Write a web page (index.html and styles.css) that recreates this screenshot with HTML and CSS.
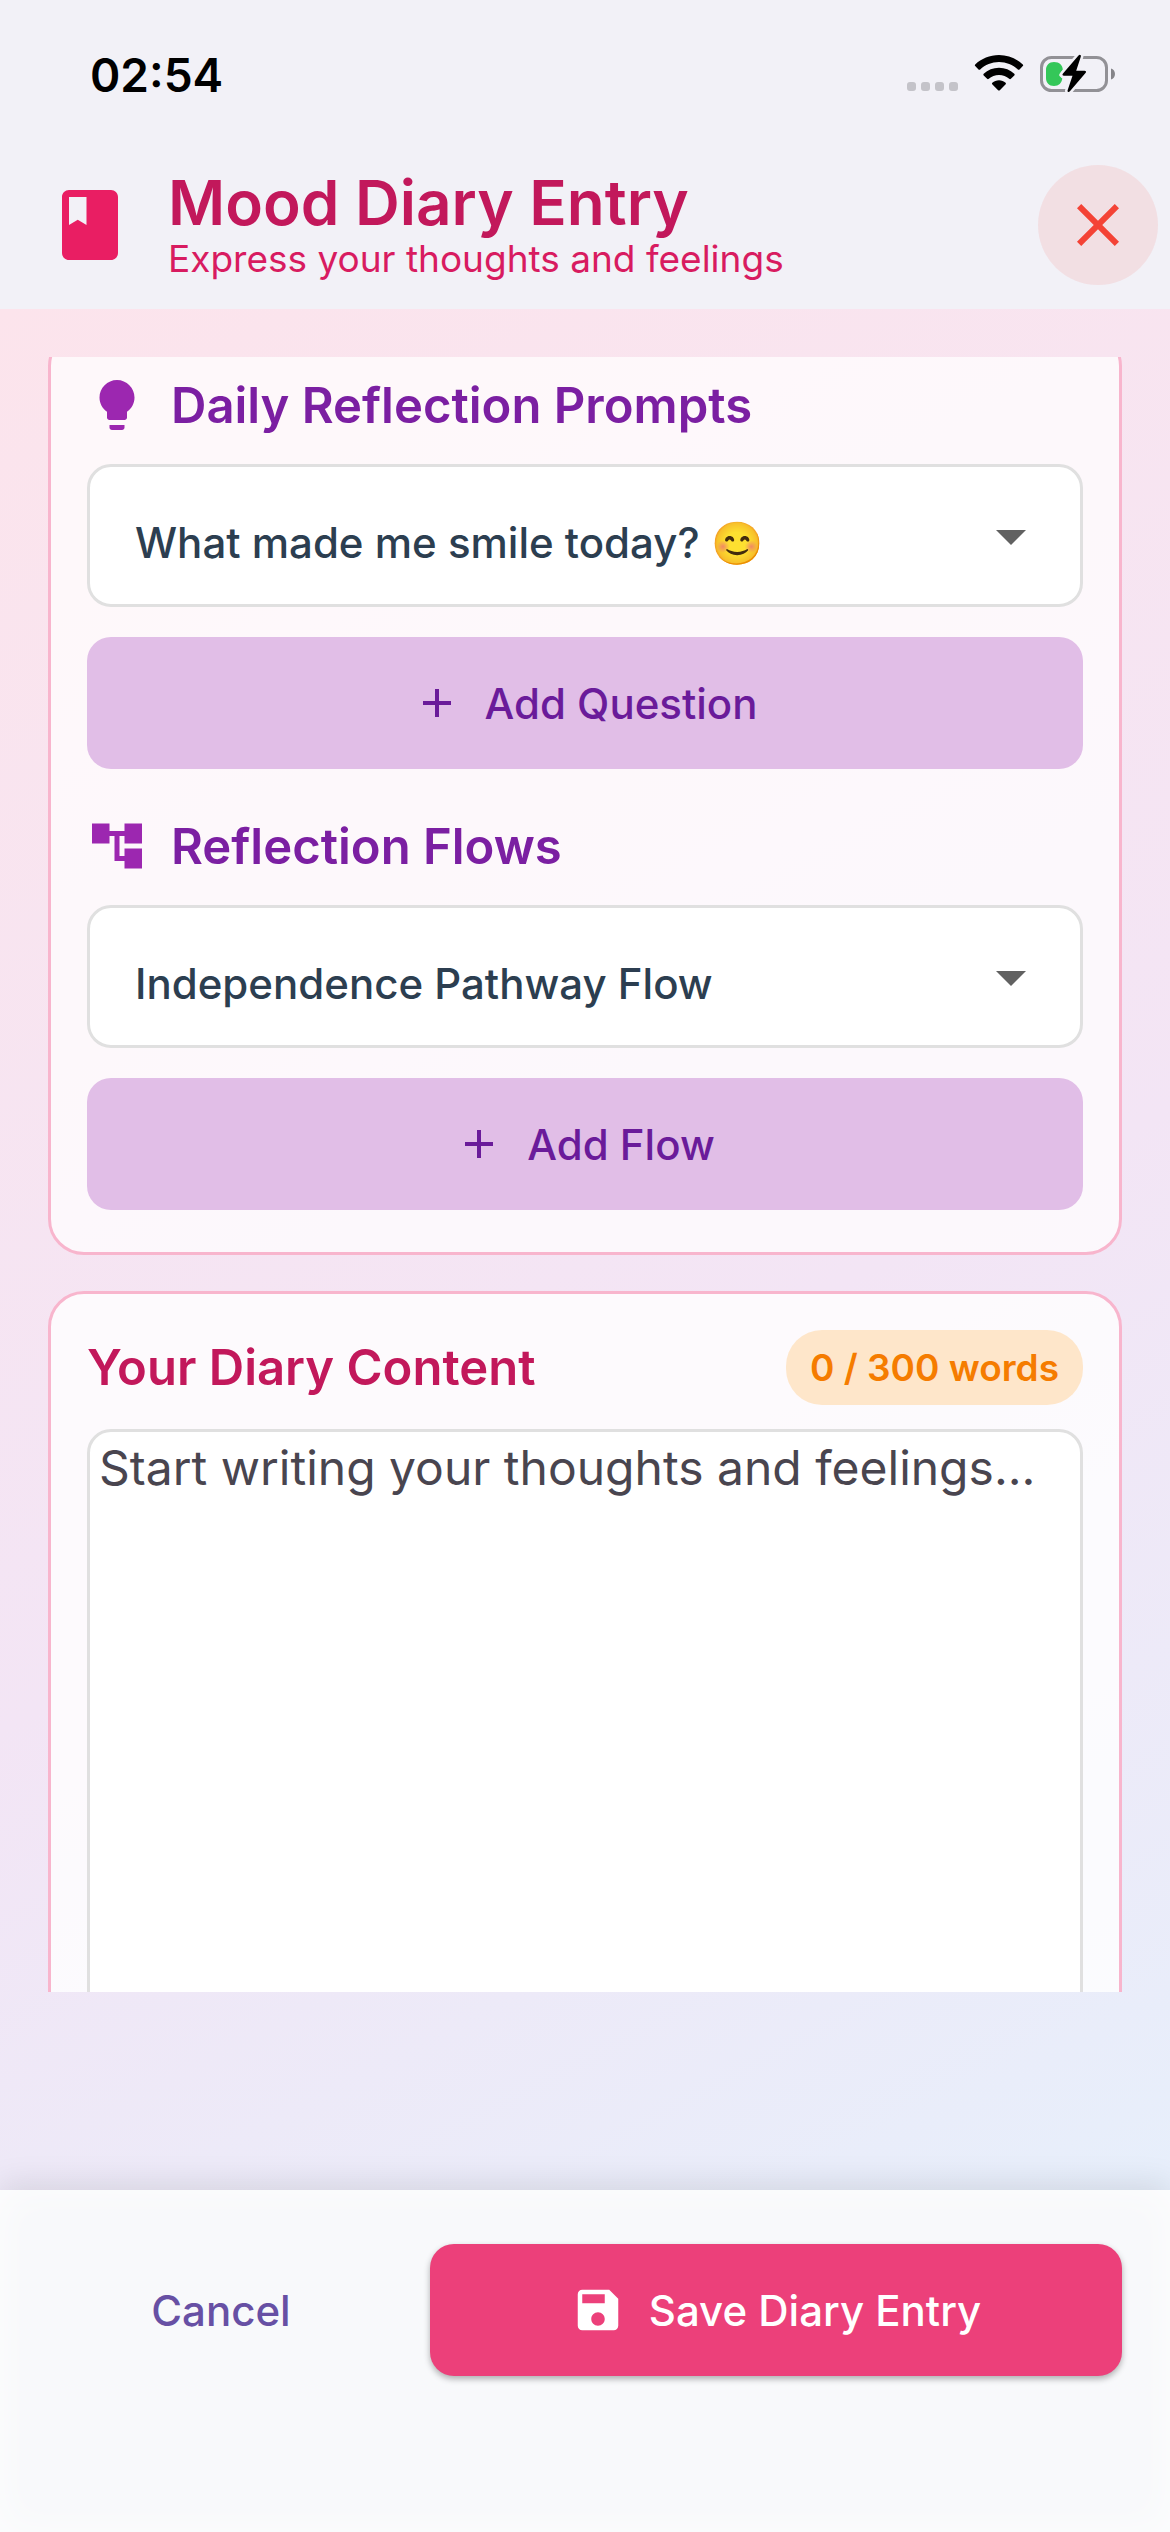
FILE: index.html
```html
<!DOCTYPE html>
<html lang="en">
<head>
<meta charset="utf-8">
<meta name="viewport" content="width=device-width, initial-scale=1">
<title>Mood Diary Entry</title>
<link rel="stylesheet" href="styles.css">
</head>
<body>
<header class="top">
  <div class="status">
    <span class="clock">02:54</span>
    <svg class="status-icons" width="210" height="42" viewBox="0 0 210 42" aria-hidden="true">
      <g fill="#c4c3c9">
        <rect x="0" y="28" width="9" height="9" rx="3"/>
        <rect x="14" y="28" width="9" height="9" rx="3"/>
        <rect x="28" y="28" width="9" height="9" rx="3"/>
        <rect x="42" y="28" width="9" height="9" rx="3"/>
      </g>
      <path d="M92 1c9.200 0 17.600 3.600 23.800 9.400.5.500.5 1.200 0 1.700l-3.300 3.300c-.5.500-1.200.5-1.700 0C105.900 10.800 99.300 8 92 8s-13.900 2.800-18.800 7.400c-.5.500-1.200.5-1.700 0l-3.300-3.300c-.5-.5-.5-1.200 0-1.700C74.400 4.600 82.800 1 92 1z"/>
      <path d="M92 13.800c5.900 0 11.200 2.200 15.300 5.900.5.500.5 1.200 0 1.700l-3.400 3.400c-.5.500-1.200.5-1.700 0-2.700-2.400-6.300-3.800-10.200-3.800s-7.500 1.400-10.200 3.800c-.5.500-1.200.5-1.700 0l-3.400-3.400c-.5-.5-.5-1.200 0-1.700 4.100-3.700 9.400-5.900 15.300-5.900z"/>
      <path d="M92 26.300c2.500 0 4.800.9 6.600 2.400.5.500.5 1.100.1 1.600l-5.900 5.900c-.5.500-1.200.5-1.700 0l-5.900-5.900c-.4-.5-.4-1.100.1-1.600 1.800-1.500 4.200-2.400 6.700-2.400z"/>
      <rect x="134.500" y="3.500" width="65" height="33" rx="10" fill="none" stroke="#929196" stroke-width="3"/>
      <path d="M204 14.500c2.500.8 4 2.900 4 5.500s-1.500 4.700-4 5.500z" fill="#858489"/>
      <path d="M147 8c5.500 0 8.800 3.500 8.800 8l-3 3.500c-.8 1-.8 2 0 2.800l2.500 2.300c-.5 4.500-3.500 7.400-8.300 7.400-5 0-8-3.500-8-8v-8c0-4.500 3-8 8-8z" fill="#34c759"/>
      <path d="M171.500 1.500 156 19.500c-1 1.200-.6 2.300 1 2.300h8.500L160.700 36c-.7 2 1 2.800 2.200 1.300L178.500 19c1-1.200.6-2.300-1-2.300h-8.300l4.600-13.900c.6-2-1.100-2.800-2.300-1.300z" stroke="#f2f1f7" stroke-width="5" paint-order="stroke"/>
    </svg>
  </div>
  <div class="appbar">
    <svg class="icon-book" viewBox="0 0 24 24" aria-hidden="true"><path d="M18 2H6c-1.100 0-2 .9-2 2v16c0 1.100.9 2 2 2h12c1.100 0 2-.9 2-2V4c0-1.100-.9-2-2-2zM6 4h5v8l-2.500-1.500L6 12V4z"/></svg>
    <div class="heading">
      <h1 class="title">Mood Diary Entry</h1>
      <p class="subtitle">Express your thoughts and feelings</p>
    </div>
    <button class="close" type="button" aria-label="Close">
      <svg viewBox="0 0 24 24" aria-hidden="true"><path d="M19 6.410L17.590 5 12 10.590 6.410 5 5 6.410 10.590 12 5 17.590 6.410 19 12 13.410 17.590 19 19 17.590 13.410 12z"/></svg>
    </button>
  </div>
</header>

<main class="page">
  <div class="scroll">
    <section class="card prompts">
      <div class="group">
        <label class="section-title" for="prompt">
          <svg viewBox="0 0 24 24" aria-hidden="true"><path d="M9 21c0 .55.45 1 1 1h4c.55 0 1-.45 1-1v-1H9v1zm3-19C8.140 2 5 5.140 5 9c0 2.380 1.190 4.470 3 5.740V17c0 .55.45 1 1 1h6c.55 0 1-.45 1-1v-2.260c1.810-1.270 3-3.360 3-5.740 0-3.860-3.140-7-7-7z"/></svg>
          Daily Reflection Prompts
        </label>
        <div class="dropdown">
          <select id="prompt"><option>What made me smile today? 😊</option></select>
          <svg viewBox="0 0 24 24" aria-hidden="true"><path d="M7 10l5 5 5-5z"/></svg>
        </div>
        <button class="btn-add" type="button">
          <svg viewBox="0 0 24 24" aria-hidden="true"><path d="M19 13h-6v6h-2v-6H5v-2h6V5h2v6h6v2z"/></svg>
          Add Question
        </button>
      </div>
      <div class="group">
        <label class="section-title" for="flow">
          <svg viewBox="0 0 24 24" aria-hidden="true"><path d="M22 11V3h-7v3H9V3H2v8h7V8h2v10h4v3h7v-8h-7v3h-2V8h2v3z"/></svg>
          Reflection Flows
        </label>
        <div class="dropdown">
          <select id="flow"><option>Independence Pathway Flow</option></select>
          <svg viewBox="0 0 24 24" aria-hidden="true"><path d="M7 10l5 5 5-5z"/></svg>
        </div>
        <button class="btn-add" type="button">
          <svg viewBox="0 0 24 24" aria-hidden="true"><path d="M19 13h-6v6h-2v-6H5v-2h6V5h2v6h6v2z"/></svg>
          Add Flow
        </button>
      </div>
    </section>

    <section class="card diary">
      <div class="diary-head">
        <label class="diary-title" for="entry">Your Diary Content</label>
        <span class="count">0 / 300 words</span>
      </div>
      <textarea id="entry" class="entry" placeholder="Start writing your thoughts and feelings..."></textarea>
    </section>
  </div>
</main>

<footer class="actions">
  <button class="btn-cancel" type="button">Cancel</button>
  <button class="btn-save" type="button">
    <svg viewBox="0 0 24 24" aria-hidden="true"><path d="M17 3H5c-1.110 0-2 .9-2 2v14c0 1.100.89 2 2 2h14c1.100 0 2-.9 2-2V7l-4-4zm-5 16c-1.660 0-3-1.340-3-3s1.340-3 3-3 3 1.340 3 3-1.340 3-3 3zm3-10H5V5h10v4z"/></svg>
    Save Diary Entry
  </button>
</footer>
</body>
</html>
```
FILE: styles.css
```css
*, *::before, *::after { box-sizing: border-box; }

body {
  margin: 0;
  height: 100vh;
  display: flex;
  flex-direction: column;
  font-family: Inter, "Noto Sans", "Liberation Sans", sans-serif;
  background: #f2f1f7;
}

button, select, textarea { font: inherit; }
button { border: 0; padding: 0; cursor: pointer; }
svg { display: block; flex: none; fill: currentColor; }

/* Header */
.top { flex: none; background: #f2f1f7; }

.status {
  height: 141px;
  padding: 9px 53px 0 90px;
  display: flex;
  align-items: center;
  justify-content: space-between;
}
.clock { font-size: 46px; font-weight: 600; color: #000; }
.status-icons { color: #000; }

.appbar {
  height: 168px;
  padding: 0 12px 0 48px;
  display: flex;
  align-items: center;
  gap: 36px;
}
.icon-book { width: 84px; height: 84px; color: #e91e63; }
.heading { flex: 1; }
.title { margin: 0; font-size: 62px; line-height: 68px; font-weight: 600; color: #c2185b; }
.subtitle { margin: 0; font-size: 37px; line-height: 44px; color: #d81b60; }
.close {
  width: 120px;
  height: 120px;
  border-radius: 50%;
  display: grid;
  place-items: center;
  color: #f44336;
  background: rgba(244, 67, 54, .1);
}
.close svg { width: 72px; height: 72px; }

/* Body: the gradient runs on under the footer */
.page {
  flex: 1;
  min-height: 0;
  display: flex;
  flex-direction: column;
  margin-bottom: -342px;
  padding: 48px 48px 540px;
  background: linear-gradient(152deg, #fce4ec, #f3e5f5 50%, #e3f2fd);
}
.scroll {
  flex: 1;
  min-height: 0;
  overflow-y: auto;
  scrollbar-width: none;
}
.card {
  padding: 36px;
  border: 3px solid #f8b5cd;
  border-radius: 36px;
  background: rgba(255, 255, 255, .8);
}
.prompts {
  margin-top: -27px;
  display: grid;
  gap: 35px;
  background: rgba(255, 255, 255, .72);
}
.group { padding: 6px 0; display: grid; }
.section-title {
  height: 60px;
  margin-bottom: 29px;
  display: flex;
  align-items: center;
  gap: 24px;
  font-size: 49px;
  font-weight: 600;
  color: #7b1fa2;
}
.section-title svg { width: 60px; height: 60px; color: #9c27b0; }

.dropdown { position: relative; height: 143px; margin-bottom: 30px; }
.dropdown select {
  width: 100%;
  height: 100%;
  padding: 14px 120px 0 45px;
  appearance: none;
  border: 3px solid #e0e0e0;
  border-radius: 24px;
  background: #fff;
  color: #2c3e50;
  font-size: 42px;
  font-weight: 500;
}
.dropdown svg {
  position: absolute;
  top: 36px;
  right: 36px;
  width: 72px;
  height: 72px;
  color: #616161;
  pointer-events: none;
}

.btn-add, .btn-save {
  height: 132px;
  display: flex;
  align-items: center;
  justify-content: center;
  gap: 24px;
  border-radius: 24px;
  font-size: 42px;
  font-weight: 500;
}
.btn-add { background: #e1bee7; color: #6a1b9a; }
.btn-add svg { width: 48px; height: 48px; }

.diary { margin-top: 36px; }
.diary-head {
  display: flex;
  align-items: center;
  justify-content: space-between;
  margin-bottom: 24px;
}
.diary-title { font-size: 49px; font-weight: 600; color: #c2185b; }
.count {
  padding: 0 24px;
  line-height: 75px;
  border-radius: 36px;
  font-size: 37px;
  font-weight: 600;
  color: #f57c00;
  background: #fee6ca;
}
.entry {
  display: block;
  width: 100%;
  height: 900px;
  padding: 6px 9px;
  border: 3px solid #e0e0e0;
  border-radius: 24px;
  resize: none;
  background: #fff;
  font-size: 48px;
  line-height: 60px;
}
.entry::placeholder { color: #49454f; opacity: 1; }

/* Footer */
.actions {
  flex: none;
  position: relative;
  height: 342px;
  padding: 54px 48px 0;
  display: grid;
  grid-template-columns: 1fr 2fr;
  align-items: start;
  gap: 36px;
  background: #f8f9fb;
  box-shadow: 0 -6px 30px rgba(0, 0, 0, .1), inset 0 0 42px rgba(255, 255, 255, .7);
}
.btn-cancel {
  height: 132px;
  font-size: 42px;
  font-weight: 500;
  color: #6750a4;
  background: none;
}
.btn-save {
  color: #fff;
  background: #ec407a;
  box-shadow: 0 3px 6px rgba(0, 0, 0, .3);
}
.btn-save svg { width: 54px; height: 54px; }
```
